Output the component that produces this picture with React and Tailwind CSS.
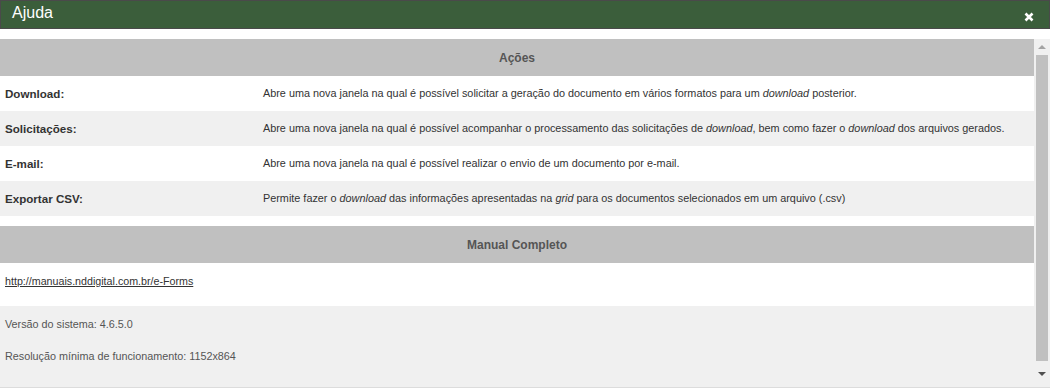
import React from "react";

const acoes = [
  {
    label: "Download:",
    desc: (
      <>
        Abre uma nova janela na qual é possível solicitar a geração do documento em vários formatos para um <em>download</em> posterior.
      </>
    ),
  },
  {
    label: "Solicitações:",
    desc: (
      <>
        Abre uma nova janela na qual é possível acompanhar o processamento das solicitações de <em>download</em>, bem como fazer o <em>download</em> dos arquivos gerados.
      </>
    ),
  },
  {
    label: "E-mail:",
    desc: <>Abre uma nova janela na qual é possível realizar o envio de um documento por e-mail.</>,
  },
  {
    label: "Exportar CSV:",
    desc: (
      <>
        Permite fazer o <em>download</em> das informações apresentadas na <em>grid</em> para os documentos selecionados em um arquivo (.csv)
      </>
    ),
  },
];

function SectionHeader({ children }) {
  return (
    <div className="h-[37px] bg-[#c0c0c0] flex items-center justify-center text-[12px] font-bold text-[#555]">
      {children}
    </div>
  );
}

export default function App() {
  return (
    <div className="w-[1050px] h-[390px] bg-white overflow-hidden font-['Liberation_Sans',Arial,sans-serif] text-[#333]">
      {/* cabeçalho do diálogo */}
      <div className="h-[29px] bg-[#3b5e3b] border border-[#4a4a4a] flex items-center justify-between pl-[11px] pr-[15px]">
        <span className="text-white text-[16px] leading-none -mt-[3px]">Ajuda</span>
        <svg width="10" height="10" viewBox="0 0 10 10" className="mt-[5px]">
          <path d="M1.5 1.5 L8.5 8.5 M8.5 1.5 L1.5 8.5" stroke="#fff" strokeWidth="2.6" />
        </svg>
      </div>

      <div className="flex mt-[10px] h-[349px] border-b border-[#dcdcdc]">
        {/* conteúdo */}
        <div className="w-[1034px] flex flex-col">
          <SectionHeader>Ações</SectionHeader>
          {acoes.map((a, i) => (
            <div
              key={a.label}
              className={`h-[35px] flex items-center ${i % 2 === 1 ? "bg-[#f0f0f0]" : "bg-white"}`}
            >
              <div className="w-[263px] pl-[5px] text-[11.6px] font-bold">{a.label}</div>
              <div className="text-[10.85px]">{a.desc}</div>
            </div>
          ))}
          <div className="h-[10px]" />
          <SectionHeader>Manual Completo</SectionHeader>
          <div className="h-[43px] pl-[5px] pt-[10px] text-[10.7px] leading-[16px]">
            <a href="#" className="underline text-[#333]">
              http://manuais.nddigital.com.br/e-Forms
            </a>
          </div>
          <div className="flex-1 bg-[#f0f0f0] pl-[5px] pt-[10px] text-[10.8px] leading-[16px] text-[#555] flex flex-col gap-[16px]">
            <p>Versão do sistema: 4.6.5.0</p>
            <p>Resolução mínima de funcionamento: 1152x864</p>
          </div>
        </div>

        {/* barra de rolagem */}
        <div className="w-[16px] bg-[#f0f0f0] flex flex-col items-center">
          <div className="h-[16px] flex items-center justify-center">
            <svg width="8" height="5" viewBox="0 0 8 5">
              <path d="M4 0 L8 4 L0 4 Z" fill="#a3a3a3" />
            </svg>
          </div>
          <div className="w-[12px] h-[306px] bg-[#c0c0c0]" />
          <div className="flex-1 flex items-center justify-center">
            <svg width="8" height="5" viewBox="0 0 8 5">
              <path d="M0 0 L8 0 L4 4 Z" fill="#505050" />
            </svg>
          </div>
        </div>
      </div>
    </div>
  );
}
